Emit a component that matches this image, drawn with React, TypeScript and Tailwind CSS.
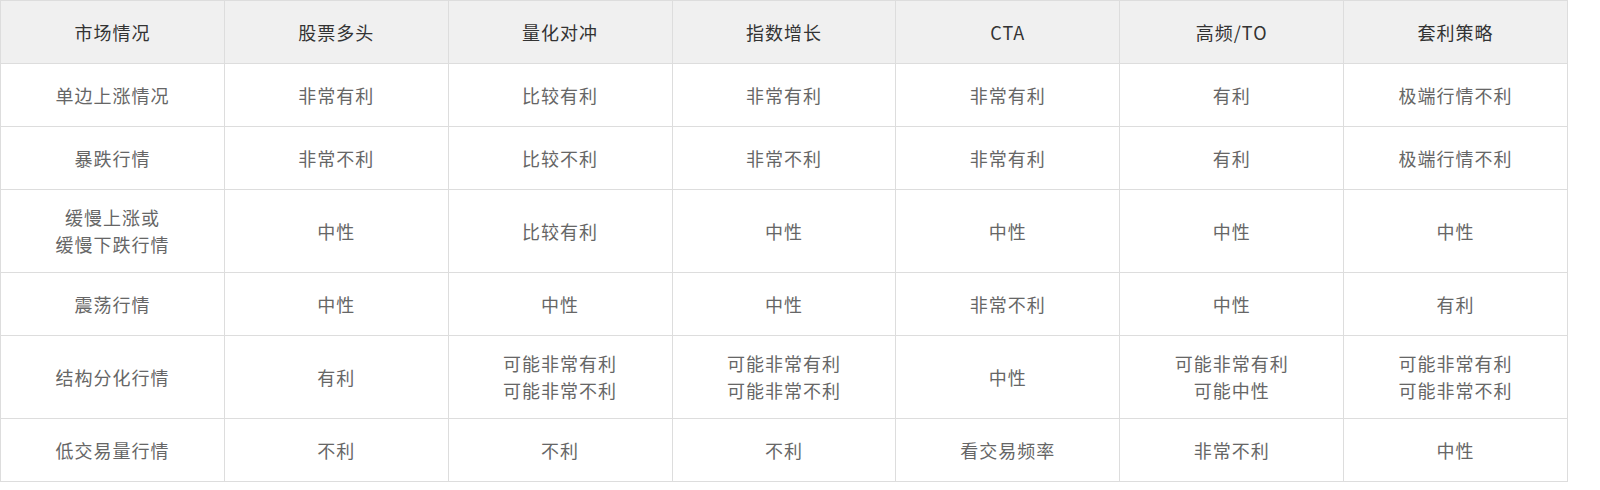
const headers = ['市场情况', '股票多头', '量化对冲', '指数增长', 'CTA', '高频/TO', '套利策略'];

const rows: string[][] = [
  ['单边上涨情况', '非常有利', '比较有利', '非常有利', '非常有利', '有利', '极端行情不利'],
  ['暴跌行情', '非常不利', '比较不利', '非常不利', '非常有利', '有利', '极端行情不利'],
  ['缓慢上涨或\n缓慢下跌行情', '中性', '比较有利', '中性', '中性', '中性', '中性'],
  ['震荡行情', '中性', '中性', '中性', '非常不利', '中性', '有利'],
  ['结构分化行情', '有利', '可能非常有利\n可能非常不利', '可能非常有利\n可能非常不利', '中性', '可能非常有利\n可能中性', '可能非常有利\n可能非常不利'],
  ['低交易量行情', '不利', '不利', '不利', '看交易频率', '非常不利', '中性'],
];

export default function App() {
  return (
    <div className="bg-white min-h-[490px] font-['Noto_Sans_CJK_SC','Noto_Sans',sans-serif]">
      <table className="w-[1568px] table-fixed border-collapse text-[18px] leading-[27px] tracking-[1px] text-center">
        <thead>
          <tr className="h-[63px] bg-[#f0f0f0]">
            {headers.map((h) => (
              <th key={h} className="border border-[#dddddd] px-2 py-[14px] font-normal text-[#333333]">
                {h}
              </th>
            ))}
          </tr>
        </thead>
        <tbody>
          {rows.map((row, i) => (
            <tr key={i} className="h-[63px]">
              {row.map((cell, j) => (
                <td key={j} className="border border-[#dddddd] px-2 py-[14px] text-[#666666] whitespace-pre-line">
                  {cell}
                </td>
              ))}
            </tr>
          ))}
        </tbody>
      </table>
    </div>
  );
}
